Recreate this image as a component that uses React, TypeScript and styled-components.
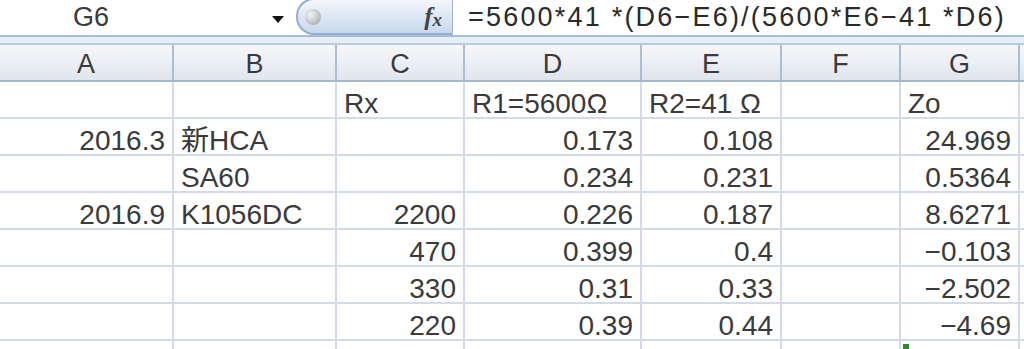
import React from 'react';
import styled, { createGlobalStyle } from 'styled-components';

const GlobalStyle = createGlobalStyle`
    html, body {
        margin: 0;
        padding: 0;
        background: #fff;
        overflow: hidden;
    }
    body {
        font-family: "Liberation Sans", "Noto Sans CJK JP", sans-serif;
    }
`;

const columns = ['A', 'B', 'C', 'D', 'E', 'F', 'G'];

type Cell = { v: string; num?: boolean };

const rows: Cell[][] = [
    [{ v: '' }, { v: '' }, { v: 'Rx' }, { v: 'R1=5600Ω' }, { v: 'R2=41 Ω' }, { v: '' }, { v: 'Zo' }],
    [{ v: '2016.3', num: true }, { v: '新HCA' }, { v: '' }, { v: '0.173', num: true }, { v: '0.108', num: true }, { v: '' }, { v: '24.969', num: true }],
    [{ v: '' }, { v: 'SA60' }, { v: '' }, { v: '0.234', num: true }, { v: '0.231', num: true }, { v: '' }, { v: '0.5364', num: true }],
    [{ v: '2016.9', num: true }, { v: 'K1056DC' }, { v: '2200', num: true }, { v: '0.226', num: true }, { v: '0.187', num: true }, { v: '' }, { v: '8.6271', num: true }],
    [{ v: '' }, { v: '' }, { v: '470', num: true }, { v: '0.399', num: true }, { v: '0.4', num: true }, { v: '' }, { v: '−0.103', num: true }],
    [{ v: '' }, { v: '' }, { v: '330', num: true }, { v: '0.31', num: true }, { v: '0.33', num: true }, { v: '' }, { v: '−2.502', num: true }],
    [{ v: '' }, { v: '' }, { v: '220', num: true }, { v: '0.39', num: true }, { v: '0.44', num: true }, { v: '' }, { v: '−4.69', num: true }],
    [{ v: '' }, { v: '' }, { v: '' }, { v: '' }, { v: '' }, { v: '' }, { v: '' }],
];

const App: React.FC = () => {
    return (
        <>
            <GlobalStyle />
            <StyledSheet>
                <StyledFormulaBar>
                    <StyledNameBox>
                        <span>G6</span>
                        <StyledCaret />
                    </StyledNameBox>
                    <StyledPill>
                        <StyledKnob />
                        <StyledFx>
                            f<sub>x</sub>
                        </StyledFx>
                    </StyledPill>
                    <StyledFormula>=5600*41 *(D6−E6)/(5600*E6−41 *D6)</StyledFormula>
                </StyledFormulaBar>
                <StyledBand />
                <StyledGrid>
                    {columns.map((c) => (
                        <StyledHeadCell key={c}>{c}</StyledHeadCell>
                    ))}
                    <StyledHeadCell />
                    {rows.map((r, i) => (
                        <React.Fragment key={i}>
                            {r.map((cell, j) => (
                                <StyledCell key={j} $num={cell.num}>
                                    {cell.v}
                                </StyledCell>
                            ))}
                            <StyledCell />
                        </React.Fragment>
                    ))}
                </StyledGrid>
                <StyledFillHandle />
            </StyledSheet>
        </>
    );
};

export default App;

const StyledSheet = styled.div`
    position: relative;
    width: 1024px;
    height: 349px;
    overflow: hidden;
    background: #fff;
    color: #3a3a3a;
    font-size: 28px;
`;

const StyledFormulaBar = styled.div`
    align-items: center;
    display: flex;
    height: 37px;
    border-bottom: 2px solid #a4bcd9;
    box-sizing: border-box;
`;

const StyledNameBox = styled.div`
    align-items: center;
    display: flex;
    justify-content: space-between;
    width: 284px;
    padding-left: 73px;
    box-sizing: border-box;
    color: #3a3a3a;
    font-size: 27px;
    line-height: 1;
`;

const StyledCaret = styled.div`
    width: 0;
    height: 0;
    margin-top: 4px;
    border-left: 6px solid transparent;
    border-right: 6px solid transparent;
    border-top: 7px solid #111;
`;

const StyledPill = styled.div`
    align-items: center;
    display: flex;
    justify-content: space-between;
    align-self: stretch;
    width: 157px;
    margin-left: 12px;
    margin-top: -2px;
    padding: 0 10px 0 7px;
    box-sizing: border-box;
    border: 2px solid #93aece;
    border-right: 1px solid #9cb3cf;
    border-radius: 18px 0 0 18px;
    background: linear-gradient(to bottom, #f4f7fb 0%, #dfe8f4 45%, #c9d8ec 100%);
`;

const StyledKnob = styled.div`
    width: 16px;
    height: 16px;
    border-radius: 50%;
    background: radial-gradient(circle at 35% 35%, #f4f4f4 0%, #c2c5c9 55%, #8f9398 100%);
`;

const StyledFx = styled.span`
    font-family: "Liberation Serif", serif;
    font-style: italic;
    font-weight: bold;
    font-size: 25px;
    color: #444;
    line-height: 1;

    sub {
        font-size: 19px;
        vertical-align: -1px;
    }
`;

const StyledFormula = styled.div`
    padding-left: 15px;
    color: #2a2a2a;
    white-space: nowrap;
    font-size: 27px;
    line-height: 1;
    letter-spacing: 2.2px;
`;

const StyledBand = styled.div`
    height: 8px;
    background: #e8eef6;
    border-bottom: 2px solid #b9cade;
    box-sizing: border-box;
`;

const StyledGrid = styled.div`
    display: grid;
    grid-template-columns: 174px 163px 128px 177px 140px 119px 119px 1fr;
    grid-auto-rows: 37px;
`;

const StyledHeadCell = styled.div`
    align-items: center;
    display: flex;
    justify-content: center;
    box-sizing: border-box;
    padding-top: 4px;
    border-right: 2px solid #a8bdd6;
    border-bottom: 2px solid #a2b8d2;
    background: linear-gradient(to bottom, #f5f7fa 0%, #eceff4 50%, #e0e5ec 100%);
    color: #3a3a3a;
    font-size: 27px;
    line-height: 1;
`;

const StyledCell = styled.div<{ $num?: boolean }>`
    align-items: flex-end;
    display: flex;
    justify-content: ${(p) => (p.$num ? 'flex-end' : 'flex-start')};
    box-sizing: border-box;
    padding: 0 7px 0 7px;
    border-right: 2px solid #d3dbe9;
    border-bottom: 2px solid #d3dbe9;
    white-space: nowrap;
    color: #3a3a3a;
    line-height: 26px;
`;

const StyledFillHandle = styled.div`
    position: absolute;
    left: 903px;
    top: 344px;
    width: 6px;
    height: 6px;
    background: #2f8a2f;
`;
